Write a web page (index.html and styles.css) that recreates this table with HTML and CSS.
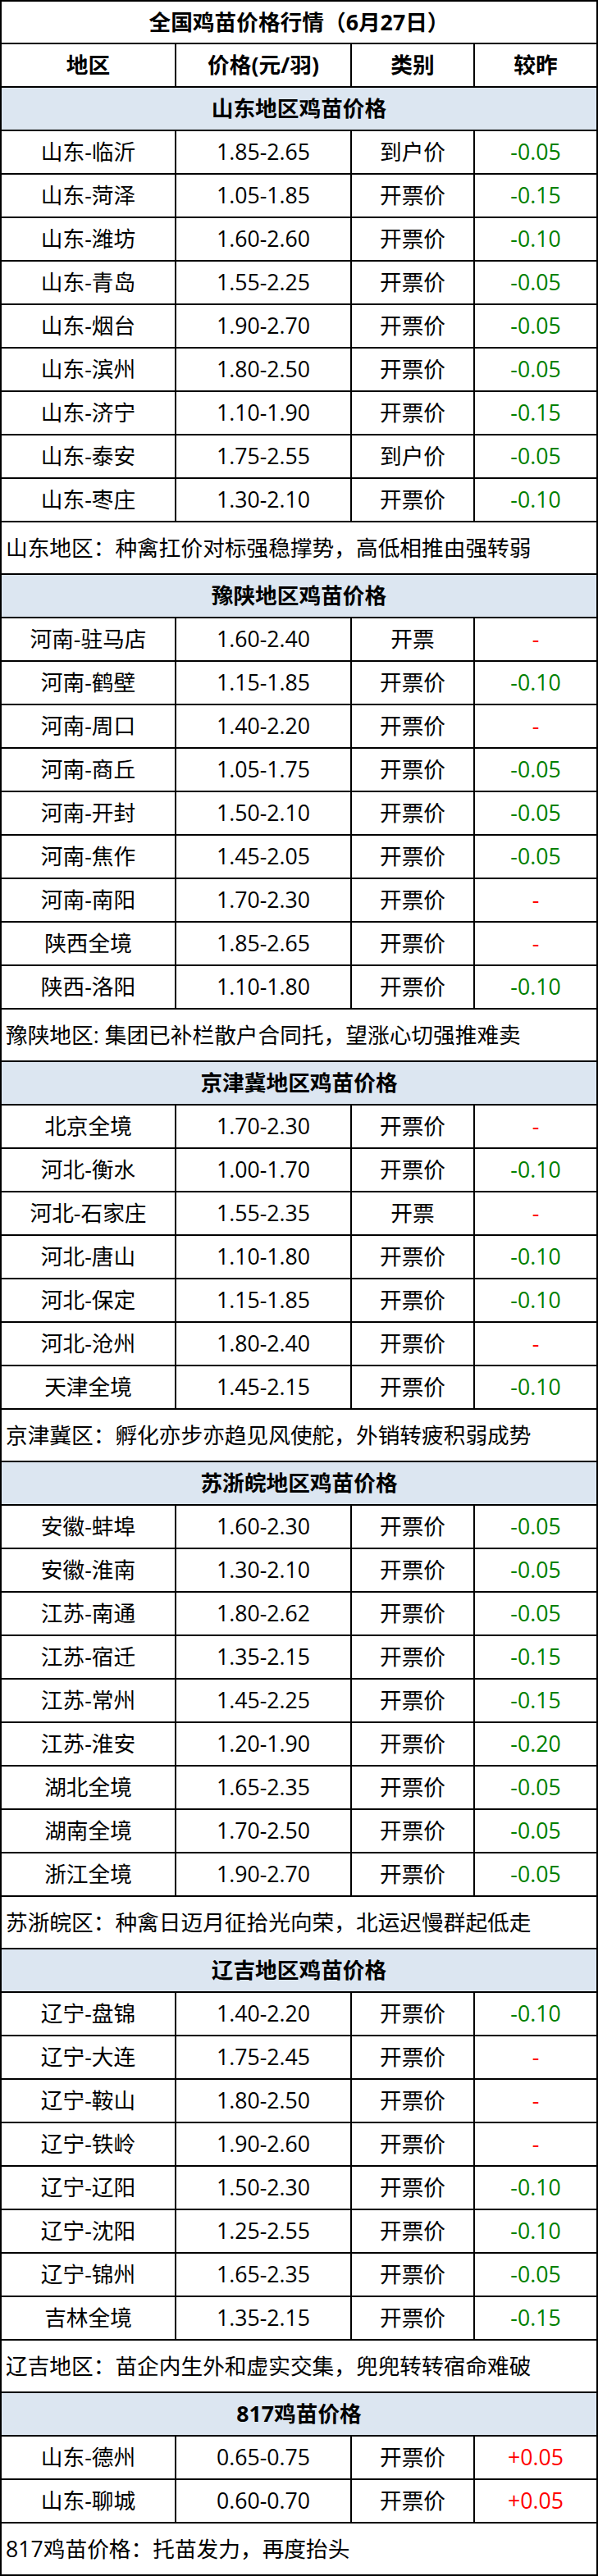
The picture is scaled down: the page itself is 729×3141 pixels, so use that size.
FILE: index.html
```html
<!DOCTYPE html>
<html lang="zh-CN">
<head>
<meta charset="utf-8">
<title>全国鸡苗价格行情</title>
<link rel="stylesheet" href="styles.css">
</head>
<body>
<div class="sheet">
  <div class="row title bold">全国鸡苗价格行情（6月27日）</div>
  <div class="row grid4 bold"><div class="c">地区</div><div class="c">价格(元/羽)</div><div class="c">类别</div><div class="c">较昨</div></div>

  <div class="row section bold">山东地区鸡苗价格</div>
  <div class="row grid4"><div class="c">山东-临沂</div><div class="c">1.85-2.65</div><div class="c">到户价</div><div class="c down">-0.05</div></div>
  <div class="row grid4"><div class="c">山东-菏泽</div><div class="c">1.05-1.85</div><div class="c">开票价</div><div class="c down">-0.15</div></div>
  <div class="row grid4"><div class="c">山东-潍坊</div><div class="c">1.60-2.60</div><div class="c">开票价</div><div class="c down">-0.10</div></div>
  <div class="row grid4"><div class="c">山东-青岛</div><div class="c">1.55-2.25</div><div class="c">开票价</div><div class="c down">-0.05</div></div>
  <div class="row grid4"><div class="c">山东-烟台</div><div class="c">1.90-2.70</div><div class="c">开票价</div><div class="c down">-0.05</div></div>
  <div class="row grid4"><div class="c">山东-滨州</div><div class="c">1.80-2.50</div><div class="c">开票价</div><div class="c down">-0.05</div></div>
  <div class="row grid4"><div class="c">山东-济宁</div><div class="c">1.10-1.90</div><div class="c">开票价</div><div class="c down">-0.15</div></div>
  <div class="row grid4"><div class="c">山东-泰安</div><div class="c">1.75-2.55</div><div class="c">到户价</div><div class="c down">-0.05</div></div>
  <div class="row grid4"><div class="c">山东-枣庄</div><div class="c">1.30-2.10</div><div class="c">开票价</div><div class="c down">-0.10</div></div>
  <div class="row note">山东地区：种禽扛价对标强稳撑势，高低相推由强转弱</div>

  <div class="row section bold">豫陕地区鸡苗价格</div>
  <div class="row grid4"><div class="c">河南-驻马店</div><div class="c">1.60-2.40</div><div class="c">开票</div><div class="c up">-</div></div>
  <div class="row grid4"><div class="c">河南-鹤壁</div><div class="c">1.15-1.85</div><div class="c">开票价</div><div class="c down">-0.10</div></div>
  <div class="row grid4"><div class="c">河南-周口</div><div class="c">1.40-2.20</div><div class="c">开票价</div><div class="c up">-</div></div>
  <div class="row grid4"><div class="c">河南-商丘</div><div class="c">1.05-1.75</div><div class="c">开票价</div><div class="c down">-0.05</div></div>
  <div class="row grid4"><div class="c">河南-开封</div><div class="c">1.50-2.10</div><div class="c">开票价</div><div class="c down">-0.05</div></div>
  <div class="row grid4"><div class="c">河南-焦作</div><div class="c">1.45-2.05</div><div class="c">开票价</div><div class="c down">-0.05</div></div>
  <div class="row grid4"><div class="c">河南-南阳</div><div class="c">1.70-2.30</div><div class="c">开票价</div><div class="c up">-</div></div>
  <div class="row grid4"><div class="c">陕西全境</div><div class="c">1.85-2.65</div><div class="c">开票价</div><div class="c up">-</div></div>
  <div class="row grid4"><div class="c">陕西-洛阳</div><div class="c">1.10-1.80</div><div class="c">开票价</div><div class="c down">-0.10</div></div>
  <div class="row note">豫陕地区: 集团已补栏散户合同托，望涨心切强推难卖</div>

  <div class="row section bold">京津冀地区鸡苗价格</div>
  <div class="row grid4"><div class="c">北京全境</div><div class="c">1.70-2.30</div><div class="c">开票价</div><div class="c up">-</div></div>
  <div class="row grid4"><div class="c">河北-衡水</div><div class="c">1.00-1.70</div><div class="c">开票价</div><div class="c down">-0.10</div></div>
  <div class="row grid4"><div class="c">河北-石家庄</div><div class="c">1.55-2.35</div><div class="c">开票</div><div class="c up">-</div></div>
  <div class="row grid4"><div class="c">河北-唐山</div><div class="c">1.10-1.80</div><div class="c">开票价</div><div class="c down">-0.10</div></div>
  <div class="row grid4"><div class="c">河北-保定</div><div class="c">1.15-1.85</div><div class="c">开票价</div><div class="c down">-0.10</div></div>
  <div class="row grid4"><div class="c">河北-沧州</div><div class="c">1.80-2.40</div><div class="c">开票价</div><div class="c up">-</div></div>
  <div class="row grid4"><div class="c">天津全境</div><div class="c">1.45-2.15</div><div class="c">开票价</div><div class="c down">-0.10</div></div>
  <div class="row note">京津冀区：孵化亦步亦趋见风使舵，外销转疲积弱成势</div>

  <div class="row section bold">苏浙皖地区鸡苗价格</div>
  <div class="row grid4"><div class="c">安徽-蚌埠</div><div class="c">1.60-2.30</div><div class="c">开票价</div><div class="c down">-0.05</div></div>
  <div class="row grid4"><div class="c">安徽-淮南</div><div class="c">1.30-2.10</div><div class="c">开票价</div><div class="c down">-0.05</div></div>
  <div class="row grid4"><div class="c">江苏-南通</div><div class="c">1.80-2.62</div><div class="c">开票价</div><div class="c down">-0.05</div></div>
  <div class="row grid4"><div class="c">江苏-宿迁</div><div class="c">1.35-2.15</div><div class="c">开票价</div><div class="c down">-0.15</div></div>
  <div class="row grid4"><div class="c">江苏-常州</div><div class="c">1.45-2.25</div><div class="c">开票价</div><div class="c down">-0.15</div></div>
  <div class="row grid4"><div class="c">江苏-淮安</div><div class="c">1.20-1.90</div><div class="c">开票价</div><div class="c down">-0.20</div></div>
  <div class="row grid4"><div class="c">湖北全境</div><div class="c">1.65-2.35</div><div class="c">开票价</div><div class="c down">-0.05</div></div>
  <div class="row grid4"><div class="c">湖南全境</div><div class="c">1.70-2.50</div><div class="c">开票价</div><div class="c down">-0.05</div></div>
  <div class="row grid4"><div class="c">浙江全境</div><div class="c">1.90-2.70</div><div class="c">开票价</div><div class="c down">-0.05</div></div>
  <div class="row note">苏浙皖区：种禽日迈月征拾光向荣，北运迟慢群起低走</div>

  <div class="row section bold">辽吉地区鸡苗价格</div>
  <div class="row grid4"><div class="c">辽宁-盘锦</div><div class="c">1.40-2.20</div><div class="c">开票价</div><div class="c down">-0.10</div></div>
  <div class="row grid4"><div class="c">辽宁-大连</div><div class="c">1.75-2.45</div><div class="c">开票价</div><div class="c up">-</div></div>
  <div class="row grid4"><div class="c">辽宁-鞍山</div><div class="c">1.80-2.50</div><div class="c">开票价</div><div class="c up">-</div></div>
  <div class="row grid4"><div class="c">辽宁-铁岭</div><div class="c">1.90-2.60</div><div class="c">开票价</div><div class="c up">-</div></div>
  <div class="row grid4"><div class="c">辽宁-辽阳</div><div class="c">1.50-2.30</div><div class="c">开票价</div><div class="c down">-0.10</div></div>
  <div class="row grid4"><div class="c">辽宁-沈阳</div><div class="c">1.25-2.55</div><div class="c">开票价</div><div class="c down">-0.10</div></div>
  <div class="row grid4"><div class="c">辽宁-锦州</div><div class="c">1.65-2.35</div><div class="c">开票价</div><div class="c down">-0.05</div></div>
  <div class="row grid4"><div class="c">吉林全境</div><div class="c">1.35-2.15</div><div class="c">开票价</div><div class="c down">-0.15</div></div>
  <div class="row note">辽吉地区：苗企内生外和虚实交集，兜兜转转宿命难破</div>

  <div class="row section bold">817鸡苗价格</div>
  <div class="row grid4"><div class="c">山东-德州</div><div class="c">0.65-0.75</div><div class="c">开票价</div><div class="c up">+0.05</div></div>
  <div class="row grid4"><div class="c">山东-聊城</div><div class="c">0.60-0.70</div><div class="c">开票价</div><div class="c up">+0.05</div></div>
  <div class="row note">817鸡苗价格：托苗发力，再度抬头</div>
</div>
</body>
</html>
```
FILE: styles.css
```css
html, body {
  margin: 0;
  padding: 0;
  background: #ffffff;
}

body {
  font-family: "Open Sans", "Noto Sans CJK SC", sans-serif;
  font-size: 26.7px;
  color: #000000;
}

.sheet {
  width: 725px;
  border: 2px solid #000000;
  border-bottom: none;
}

.row {
  height: 51px;
  border-bottom: 2px solid #000000;
  display: flex;
  align-items: center;
  justify-content: center;
  line-height: 1;
  white-space: nowrap;
}

.title {
  height: 50px;
}

.bold {
  font-weight: 700;
}

.section {
  background: #dce6f1;
}

.grid4 {
  display: grid;
  grid-template-columns: 211px 214px 150px 150px;
  align-items: stretch;
  justify-content: stretch;
}

.c {
  display: flex;
  align-items: center;
  justify-content: center;
}

.c + .c {
  border-left: 2px solid #000000;
}

.down {
  color: #008000;
}

.up {
  color: #ff0000;
}

.note {
  height: 62px;
  justify-content: flex-start;
  padding-left: 5px;
}
```
